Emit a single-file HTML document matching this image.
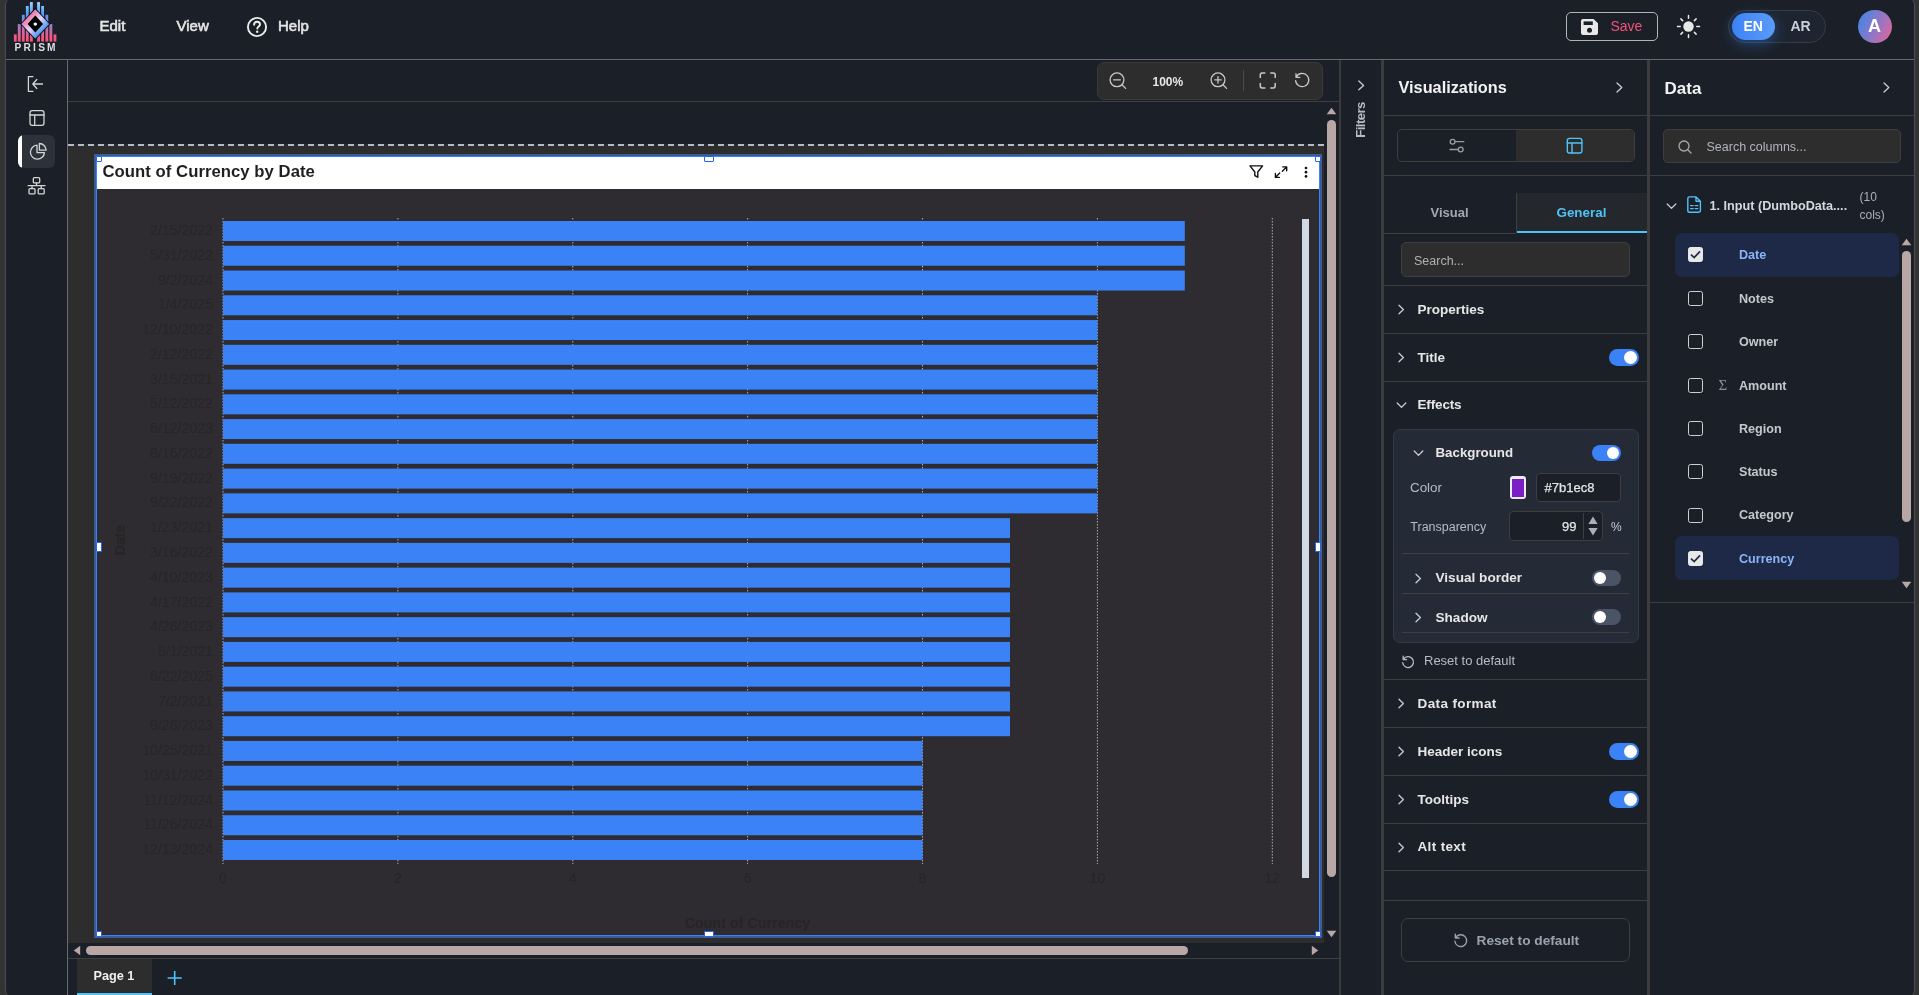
<!DOCTYPE html>
<html lang="en"><head><meta charset="utf-8"><title>PRISM</title>
<style>
*{box-sizing:border-box;margin:0;padding:0}
html,body{width:1919px;height:995px;overflow:hidden;background:#333333}
body{position:relative;font-family:"Liberation Sans",sans-serif;color:#e0e0e0;font-size:13px}
.abs{position:absolute}
#app{position:absolute;left:5px;top:-4px;width:1910px;height:1003px;background:#1b2028;border:1px solid #4c4c4c;border-radius:9px}
.hl{position:absolute;height:1px;background:#3e3e3e}
.vl{position:absolute;width:1px;background:#3e3e3e}
.t{position:absolute;white-space:nowrap;line-height:1}
.b{font-weight:bold}
svg{position:absolute;overflow:visible}
.ico{fill:none;stroke:#d4d4d4;stroke-width:1.3;stroke-linecap:round;stroke-linejoin:round}
/* toggles */
.tg{position:absolute;width:30px;height:17px;border-radius:9px;background:#3b82f6}
.tg i{position:absolute;right:2px;top:2px;width:13px;height:13px;border-radius:50%;background:#fff}
.tg.off{background:#4a5464}
.tg.off i{right:auto;left:2px}
.tg.sm{width:29px;height:16px}
.tg.sm i{width:12px;height:12px}
.acc{position:absolute;left:1417.5px;font-weight:bold;font-size:13.5px;color:#e6e6e6;white-space:nowrap;line-height:1}
.chev{position:absolute}
.cb{position:absolute;left:1688px;width:15px;height:15px;border:1.6px solid #d0d0d0;border-radius:2.5px}
.cb.on{background:#e8e8e8;border-color:#e8e8e8}
.col{position:absolute;left:1739px;font-weight:bold;font-size:12.6px;color:#c4c8ce;white-space:nowrap;line-height:1}
.col.sel{color:#8ab4f8}
.row{position:absolute;left:1675px;width:224px;height:43.5px;border-radius:7px;background:#1e2947}
.hd{position:absolute;background:#fff;border:1px solid #2563eb;border-radius:1px}
#root{position:absolute;left:0;top:0;width:1919px;height:995px;will-change:transform}

</style></head>
<body>
<div id="root">
<div id="app"></div>

<!-- ===== top bar ===== -->
<div class="hl" style="left:6px;top:59px;width:1908px;background:#676b71"></div>
<!-- logo -->
<svg style="left:10px;top:0" width="50" height="56" viewBox="10 0 50 56">
 <defs>
  <linearGradient id="lg1" gradientUnits="userSpaceOnUse" x1="0" y1="2" x2="0" y2="42">
   <stop offset="0" stop-color="#9fd4ff"/><stop offset="0.3" stop-color="#4f9cf5"/><stop offset="0.6" stop-color="#a879c4"/><stop offset="0.85" stop-color="#e85a8a"/><stop offset="1" stop-color="#ff4f7a"/>
  </linearGradient>
  <linearGradient id="lg2" gradientUnits="userSpaceOnUse" x1="27" y1="16" x2="43" y2="32">
   <stop offset="0" stop-color="#ee6aa0"/><stop offset="0.5" stop-color="#e8d6f8"/><stop offset="1" stop-color="#3b93f2"/>
  </linearGradient>
 </defs>
 <g fill="url(#lg1)">
  <rect x="13.9" y="34.4" width="2.8" height="7.2"/>
  <rect x="17.8" y="24.1" width="2.9" height="17.5"/>
  <rect x="21.9" y="14.8" width="2.8" height="26.8"/>
  <rect x="25.9" y="6" width="2.8" height="35.6"/>
  <rect x="29.9" y="2.1" width="2.9" height="39.5"/>
  <rect x="37.1" y="2.1" width="2.9" height="39.5"/>
  <rect x="41.2" y="6" width="2.8" height="35.6"/>
  <rect x="45.4" y="14.8" width="2.8" height="26.8"/>
  <rect x="49.4" y="24.1" width="2.9" height="17.5"/>
  <rect x="53.6" y="34.4" width="2.8" height="7.2"/>
 </g>
 <polygon points="35.3,8.1 50.3,24.0 35.3,39.9 20.3,24.0" fill="#000"/>
 <polygon points="35.3,9.2 49.3,24.0 35.3,38.8 21.3,24.0" fill="url(#lg2)"/>
 <polygon points="35.3,15.5 43.1,24.0 35.3,32.5 27.5,24.0" fill="#000"/>
 <circle cx="35.3" cy="24.1" r="1.7" fill="#fff"/>
 <text x="35.1" y="50.9" text-anchor="middle" font-family="Liberation Sans, sans-serif" font-size="10.2" font-weight="bold" fill="#dcdcdc" textLength="41" lengthAdjust="spacing">PRISM</text>
</svg>
<div class="t" style="left:99.5px;top:17.5px;font-size:15px;color:#e4e4e4;-webkit-text-stroke:0.6px #e4e4e4">Edit</div>
<div class="t" style="left:176.5px;top:17.5px;font-size:15px;color:#e4e4e4;-webkit-text-stroke:0.6px #e4e4e4">View</div>
<svg style="left:246px;top:15.6px" width="22" height="22" viewBox="0 0 22 22"><circle cx="11" cy="11" r="9.1" fill="none" stroke="#ececec" stroke-width="1.9"/><path d="M8.1 8.7c0-1.7 1.3-2.9 3-2.9 1.6 0 2.9 1 2.9 2.6 0 2-2.7 2.2-2.7 4.2" fill="none" stroke="#ececec" stroke-width="1.9" stroke-linecap="round"/><circle cx="11.2" cy="15.8" r="1.2" fill="#ececec"/></svg>
<div class="t" style="left:278px;top:17.5px;font-size:15px;color:#e4e4e4;-webkit-text-stroke:0.6px #e4e4e4">Help</div>

<!-- save -->
<div class="abs" style="left:1566px;top:12px;width:92px;height:29px;border:1px solid #b4b4b4;border-radius:5px"></div>
<svg style="left:1581px;top:19px" width="17" height="16" viewBox="0 0 17 16"><path d="M2 0h10.5L17 4.2V14a2 2 0 0 1-2 2H2a2 2 0 0 1-2-2V2a2 2 0 0 1 2-2z" fill="#e8e8e8"/><rect x="2.6" y="2.4" width="9.2" height="3.6" fill="#1b2028"/><circle cx="8.5" cy="11.3" r="2.5" fill="#1b2028"/></svg>
<div class="t" style="left:1610.5px;top:18.7px;font-size:14px;color:#f0527a">Save</div>
<!-- sun -->
<svg style="left:1676px;top:14px" width="25" height="25" viewBox="-12.5 -12.5 25 25"><circle r="5.2" fill="#e8e8e8"/><g stroke="#e8e8e8" stroke-width="1.5" stroke-linecap="round"><path d="M0 -8.3V-11M0 8.3V11M-8.3 0H-11M8.3 0H11M-5.9 -5.9L-7.6 -7.6M5.9 -5.9L7.6 -7.6M-5.9 5.9L-7.6 7.6M5.9 5.9L7.6 7.6"/></g></svg>
<!-- lang -->
<div class="abs" style="left:1728px;top:10px;width:98px;height:33px;border:1px solid #313c4f;border-radius:17px;background:#1e2530"></div>
<div class="abs" style="left:1732px;top:13px;width:43px;height:27px;border-radius:14px;background:linear-gradient(90deg,#3b82f6,#5b9cf8);box-shadow:0 4px 14px rgba(59,130,246,.4)"></div>
<div class="t b" style="left:1743.5px;top:18.7px;font-size:14px;color:#fff">EN</div>
<div class="t b" style="left:1790.5px;top:18.7px;font-size:14px;color:#c8d0dc">AR</div>
<!-- avatar -->
<div class="abs" style="left:1858px;top:9.5px;width:33.5px;height:33.5px;border-radius:50%;background:linear-gradient(115deg,#3f86e8 5%,#8a78c8 50%,#e0669c 95%)"></div>
<div class="t b" style="left:1868px;top:17px;font-size:18px;color:#fff">A</div>

<!-- ===== left sidebar ===== -->
<div class="vl" style="left:67px;top:60px;height:935px;background:#676b71"></div>
<svg style="left:26px;top:74px" width="20" height="20" viewBox="26 74 20 20"><path class="ico" d="M33 76.6H28.4V91.3H33M42.5 84H33.2M36.8 79.5L32.8 84L36.8 88.5"/></svg>
<svg style="left:28px;top:109px" width="18" height="18" viewBox="28 109 18 18"><rect class="ico" x="30" y="110.7" width="14" height="14.6" rx="2.2"/><path class="ico" d="M30 115H44M34.7 115V125.3"/></svg>
<div class="abs" style="left:18px;top:135px;width:37px;height:33px;border-radius:6px;background:#2c313a;overflow:hidden"><div style="position:absolute;left:0;top:0;width:4px;height:33px;background:#fff"></div></div>
<svg style="left:29px;top:142px" width="19" height="19" viewBox="29 142 19 19"><path class="ico" d="M37 145.2A7 7 0 1 0 44.4 152.6H37Z"/><path class="ico" d="M39.4 143.5V150.2H46.1A6.8 6.8 0 0 0 39.4 143.5Z"/></svg>
<svg style="left:27px;top:176px" width="20" height="20" viewBox="27 176 20 20"><rect class="ico" x="33.3" y="177.7" width="6.4" height="5.2" rx="1"/><rect class="ico" x="29" y="188.7" width="6" height="5.2" rx="1"/><rect class="ico" x="38.2" y="188.7" width="6" height="5.2" rx="1"/><path class="ico" d="M36.5 183V185.7M28.2 185.7H45M32 185.7V188.6M41.2 185.7V188.6"/></svg>

<!-- ===== canvas area ===== -->
<div class="hl" style="left:68px;top:101px;width:1272px"></div>
<div class="vl" style="left:1339px;top:60px;height:935px;width:2px;background:#3a3a3a"></div>
<!-- zoom toolbar -->
<div class="abs" style="left:1097px;top:62px;width:226px;height:38px;border-radius:7px;background:#2d2d2d;border:1px solid #3a3a3a"></div>
<svg style="left:1106px;top:70px" width="22" height="22" viewBox="1106 70 22 22"><circle class="ico" style="stroke:#c8c8c8" cx="1117" cy="79.8" r="6.9"/><path class="ico" style="stroke:#c8c8c8" d="M1122 84.8L1125.6 88.4M1113.6 79.8H1120.4"/></svg>
<div class="t b" style="left:1152.5px;top:75.5px;font-size:12px;color:#e8e8e8">100%</div>
<svg style="left:1207px;top:70px" width="22" height="22" viewBox="1207 70 22 22"><circle class="ico" style="stroke:#c8c8c8" cx="1218" cy="79.8" r="6.9"/><path class="ico" style="stroke:#c8c8c8" d="M1223 84.8L1226.6 88.4M1214.8 79.8H1221.2M1218 76.6V83"/></svg>
<div class="vl" style="left:1243px;top:70px;height:21px;background:#4a4a4a"></div>
<svg style="left:1258px;top:71px" width="20" height="20" viewBox="1258 71 20 20"><path class="ico" style="stroke:#c8c8c8;stroke-width:1.5" d="M1260.3 77.5V74.9A1.8 1.8 0 0 1 1262.1 73.1H1264.8M1270.8 73.1H1273.4A1.8 1.8 0 0 1 1275.2 74.9V77.5M1275.2 83.5V86.1A1.8 1.8 0 0 1 1273.4 87.9H1270.8M1264.8 87.9H1262.1A1.8 1.8 0 0 1 1260.3 86.1V83.5"/></svg>
<svg style="left:1292px;top:70px" width="22" height="22" viewBox="1292 70 22 22"><path class="ico" style="stroke:#c8c8c8" d="M1296.2 77.2A6.6 6.6 0 1 1 1295.6 80.6M1296 73.6V77.4H1299.8"/></svg>

<!-- canvas bg -->
<div class="abs" style="left:68px;top:146px;width:1256px;height:797px;background:#2d2d2d"></div>
<div class="abs" style="left:68px;top:144px;width:1256px;height:2px;background:repeating-linear-gradient(90deg,#b4bccb 0 6px,#2b2c2e 6px 10px)"></div>

<!-- chart -->
<div class="abs" style="left:94px;top:153.6px;width:1228px;height:784.7px;background:#3a5a98"></div>
<div class="abs" style="left:95.8px;top:155.8px;width:1224.4px;height:780.6px;background:#3b82f6"></div>
<div class="abs" style="left:97px;top:157px;width:1222px;height:778px;background:#2e2c30"></div>
<div class="abs" style="left:97px;top:157px;width:1222px;height:32px;background:#fff"></div>
<div class="t b" style="left:102.5px;top:163.5px;font-size:16.7px;letter-spacing:0.04px;color:#1f1f1f">Count of Currency by Date</div>
<svg style="left:1248px;top:164px" width="16" height="15" viewBox="1248 164 16 15"><path d="M1250 165.9H1262.6L1257.8 172V177.2L1254.8 175.6V172Z" fill="none" stroke="#111" stroke-width="1.4" stroke-linejoin="round"/></svg>
<svg style="left:1274px;top:165px" width="15" height="15" viewBox="1274 165 15 15"><path d="M1282.8 166.9H1286.7V170.8M1286.5 167.1L1282.4 171.2M1279.3 177.4H1275.4V173.5M1275.6 177.2L1279.7 173.1" fill="none" stroke="#111" stroke-width="1.4" stroke-linecap="round" stroke-linejoin="round"/></svg>
<svg style="left:1303px;top:165px" width="6" height="14" viewBox="1303 165 6 14"><circle cx="1306" cy="168" r="1.35" fill="#111"/><circle cx="1306" cy="172.2" r="1.35" fill="#111"/><circle cx="1306" cy="176.4" r="1.35" fill="#111"/></svg>
<svg class="plot" style="left:97px;top:189px" width="1222" height="747" viewBox="97 189 1222 747" font-family="Liberation Sans, sans-serif">
<line x1="223.0" y1="218" x2="223.0" y2="864" stroke="#d8d8d8" stroke-width="1" stroke-dasharray="1.5 1.5" opacity="0.75"/>
<line x1="397.9" y1="218" x2="397.9" y2="864" stroke="#d8d8d8" stroke-width="1" stroke-dasharray="1.5 1.5" opacity="0.75"/>
<line x1="572.8" y1="218" x2="572.8" y2="864" stroke="#d8d8d8" stroke-width="1" stroke-dasharray="1.5 1.5" opacity="0.75"/>
<line x1="747.6" y1="218" x2="747.6" y2="864" stroke="#d8d8d8" stroke-width="1" stroke-dasharray="1.5 1.5" opacity="0.75"/>
<line x1="922.5" y1="218" x2="922.5" y2="864" stroke="#d8d8d8" stroke-width="1" stroke-dasharray="1.5 1.5" opacity="0.75"/>
<line x1="1097.4" y1="218" x2="1097.4" y2="864" stroke="#d8d8d8" stroke-width="1" stroke-dasharray="1.5 1.5" opacity="0.75"/>
<line x1="1272.3" y1="218" x2="1272.3" y2="864" stroke="#d8d8d8" stroke-width="1" stroke-dasharray="1.5 1.5" opacity="0.75"/>
<rect x="223.0" y="221.00" width="961.8" height="20" fill="#3b82f6"/>
<text x="213" y="235.10" text-anchor="end" font-size="14.15" fill="#262627">2/15/2022</text>
<rect x="223.0" y="245.76" width="961.8" height="20" fill="#3b82f6"/>
<text x="213" y="259.86" text-anchor="end" font-size="14.15" fill="#262627">5/31/2022</text>
<rect x="223.0" y="270.52" width="961.8" height="20" fill="#3b82f6"/>
<text x="213" y="284.62" text-anchor="end" font-size="14.15" fill="#262627">9/2/2024</text>
<rect x="223.0" y="295.28" width="874.4" height="20" fill="#3b82f6"/>
<text x="213" y="309.38" text-anchor="end" font-size="14.15" fill="#262627">1/4/2025</text>
<rect x="223.0" y="320.04" width="874.4" height="20" fill="#3b82f6"/>
<text x="213" y="334.14" text-anchor="end" font-size="14.15" fill="#262627">12/10/2022</text>
<rect x="223.0" y="344.80" width="874.4" height="20" fill="#3b82f6"/>
<text x="213" y="358.90" text-anchor="end" font-size="14.15" fill="#262627">2/12/2022</text>
<rect x="223.0" y="369.56" width="874.4" height="20" fill="#3b82f6"/>
<text x="213" y="383.66" text-anchor="end" font-size="14.15" fill="#262627">3/15/2021</text>
<rect x="223.0" y="394.32" width="874.4" height="20" fill="#3b82f6"/>
<text x="213" y="408.42" text-anchor="end" font-size="14.15" fill="#262627">5/12/2022</text>
<rect x="223.0" y="419.08" width="874.4" height="20" fill="#3b82f6"/>
<text x="213" y="433.18" text-anchor="end" font-size="14.15" fill="#262627">5/12/2023</text>
<rect x="223.0" y="443.84" width="874.4" height="20" fill="#3b82f6"/>
<text x="213" y="457.94" text-anchor="end" font-size="14.15" fill="#262627">8/16/2022</text>
<rect x="223.0" y="468.60" width="874.4" height="20" fill="#3b82f6"/>
<text x="213" y="482.70" text-anchor="end" font-size="14.15" fill="#262627">9/19/2022</text>
<rect x="223.0" y="493.36" width="874.4" height="20" fill="#3b82f6"/>
<text x="213" y="507.46" text-anchor="end" font-size="14.15" fill="#262627">9/22/2022</text>
<rect x="223.0" y="518.12" width="787.0" height="20" fill="#3b82f6"/>
<text x="213" y="532.22" text-anchor="end" font-size="14.15" fill="#262627">1/23/2021</text>
<rect x="223.0" y="542.88" width="787.0" height="20" fill="#3b82f6"/>
<text x="213" y="556.98" text-anchor="end" font-size="14.15" fill="#262627">3/16/2022</text>
<rect x="223.0" y="567.64" width="787.0" height="20" fill="#3b82f6"/>
<text x="213" y="581.74" text-anchor="end" font-size="14.15" fill="#262627">4/10/2023</text>
<rect x="223.0" y="592.40" width="787.0" height="20" fill="#3b82f6"/>
<text x="213" y="606.50" text-anchor="end" font-size="14.15" fill="#262627">4/17/2022</text>
<rect x="223.0" y="617.16" width="787.0" height="20" fill="#3b82f6"/>
<text x="213" y="631.26" text-anchor="end" font-size="14.15" fill="#262627">4/28/2023</text>
<rect x="223.0" y="641.92" width="787.0" height="20" fill="#3b82f6"/>
<text x="213" y="656.02" text-anchor="end" font-size="14.15" fill="#262627">5/1/2021</text>
<rect x="223.0" y="666.68" width="787.0" height="20" fill="#3b82f6"/>
<text x="213" y="680.78" text-anchor="end" font-size="14.15" fill="#262627">6/22/2025</text>
<rect x="223.0" y="691.44" width="787.0" height="20" fill="#3b82f6"/>
<text x="213" y="705.54" text-anchor="end" font-size="14.15" fill="#262627">7/2/2021</text>
<rect x="223.0" y="716.20" width="787.0" height="20" fill="#3b82f6"/>
<text x="213" y="730.30" text-anchor="end" font-size="14.15" fill="#262627">9/28/2023</text>
<rect x="223.0" y="740.96" width="699.5" height="20" fill="#3b82f6"/>
<text x="213" y="755.06" text-anchor="end" font-size="14.15" fill="#262627">10/25/2021</text>
<rect x="223.0" y="765.72" width="699.5" height="20" fill="#3b82f6"/>
<text x="213" y="779.82" text-anchor="end" font-size="14.15" fill="#262627">10/31/2022</text>
<rect x="223.0" y="790.48" width="699.5" height="20" fill="#3b82f6"/>
<text x="213" y="804.58" text-anchor="end" font-size="14.15" fill="#262627">11/12/2024</text>
<rect x="223.0" y="815.24" width="699.5" height="20" fill="#3b82f6"/>
<text x="213" y="829.34" text-anchor="end" font-size="14.15" fill="#262627">11/26/2024</text>
<rect x="223.0" y="840.00" width="699.5" height="20" fill="#3b82f6"/>
<text x="213" y="854.10" text-anchor="end" font-size="14.15" fill="#262627">12/13/2024</text>
<text x="223.0" y="883" text-anchor="middle" font-size="14" fill="#252525">0</text>
<text x="397.9" y="883" text-anchor="middle" font-size="14" fill="#252525">2</text>
<text x="572.8" y="883" text-anchor="middle" font-size="14" fill="#252525">4</text>
<text x="747.6" y="883" text-anchor="middle" font-size="14" fill="#252525">6</text>
<text x="922.5" y="883" text-anchor="middle" font-size="14" fill="#252525">8</text>
<text x="1097.4" y="883" text-anchor="middle" font-size="14" fill="#252525">10</text>
<text x="1272.3" y="883" text-anchor="middle" font-size="14" fill="#252525">12</text>
<text x="747.5" y="928" text-anchor="middle" font-size="14.3" font-weight="bold" fill="#252525">Count of Currency</text>
<text transform="translate(125 540) rotate(-90)" text-anchor="middle" font-size="14.3" font-weight="bold" fill="#252525">Date</text>
<rect x="1302" y="219" width="7" height="659" fill="#cfd8e3"/>
</svg>
<!-- handles -->
<div class="hd" style="left:95.5px;top:155.5px;width:6.5px;height:6.5px"></div>
<div class="hd" style="left:703.5px;top:155.5px;width:10.5px;height:6.5px"></div>
<div class="hd" style="left:1314.5px;top:155.5px;width:6.5px;height:6.5px"></div>
<div class="hd" style="left:95.5px;top:541.5px;width:6.5px;height:10px"></div>
<div class="hd" style="left:1314.5px;top:541.5px;width:6.5px;height:10px"></div>
<div class="hd" style="left:95.5px;top:930.5px;width:6px;height:6px"></div>
<div class="hd" style="left:703.5px;top:930.5px;width:10.5px;height:6px"></div>
<div class="hd" style="left:1314.5px;top:930.5px;width:6px;height:6px"></div>

<!-- scrollbars -->
<div class="abs" style="left:1327px;top:120px;width:9px;height:757px;border-radius:5px;background:#b9a7a6"></div>
<svg style="left:1326px;top:107px" width="11" height="8" viewBox="0 0 11 8"><path d="M5.5 0.8L10.3 7.2H0.7Z" fill="#b9a7a6"/></svg>
<svg style="left:1326px;top:930px" width="11" height="8" viewBox="0 0 11 8"><path d="M5.5 7.2L10.3 0.8H0.7Z" fill="#b9a7a6"/></svg>
<div class="abs" style="left:86px;top:946px;width:1102px;height:9px;border-radius:5px;background:#b9a7a6"></div>
<svg style="left:73px;top:945px" width="8" height="11" viewBox="0 0 8 11"><path d="M0.8 5.5L7.2 0.7V10.3Z" fill="#b9a7a6"/></svg>
<svg style="left:1311px;top:945px" width="8" height="11" viewBox="0 0 8 11"><path d="M7.2 5.5L0.8 0.7V10.3Z" fill="#b9a7a6"/></svg>
<div class="hl" style="left:68px;top:958px;width:1272px"></div>
<!-- page tabs -->
<div class="abs" style="left:77px;top:959px;width:75px;height:36px;background:#2d2d2d;border-bottom:2px solid #4fc3f7"></div>
<div class="t b" style="left:93.5px;top:970.1px;font-size:12.7px;color:#f0f0f0">Page 1</div>
<svg style="left:166px;top:970px" width="17" height="16" viewBox="166 970 17 16"><path d="M167.6 978H181.8M174.7 971V985" fill="none" stroke="#4fc3f7" stroke-width="1.6"/></svg>

<!-- ===== filters strip ===== -->
<svg style="left:1356px;top:79px" width="10" height="13" viewBox="1356 79 10 13"><path class="ico" style="stroke:#c8ccd4" d="M1358.8 81L1363.6 85.4L1358.8 89.8"/></svg>
<div class="t b" style="left:1361.3px;top:119.7px;font-size:13.2px;letter-spacing:-0.6px;color:#b4bcc8;transform:translate(-50%,-50%) rotate(-90deg)">Filters</div>
<div class="vl" style="left:1381px;top:60px;height:935px;width:3px;background:#3c3c3c"></div>

<!-- ===== visualizations panel ===== -->
<div class="t b" style="left:1398.5px;top:79.4px;font-size:16.3px;color:#f2f2f2">Visualizations</div>
<svg style="left:1614px;top:81px" width="10" height="13" viewBox="0 0 10 13"><path class="ico" style="stroke:#c8ccd4" d="M3 2L7.8 6.5L3 11"/></svg>
<div class="hl" style="left:1384px;top:115px;width:263px"></div>
<div class="abs" style="left:1397px;top:129px;width:238px;height:33px;border:1px solid #3e3e3e;border-radius:5px;background:#1b2028"></div>
<div class="abs" style="left:1516px;top:130px;width:118px;height:31px;border-radius:0 4px 4px 0;background:#2d2d2d"></div>
<svg style="left:1448px;top:137px" width="18" height="17" viewBox="1448 137 18 17"><circle class="ico" style="stroke:#9c9c9c" cx="1452.6" cy="141.7" r="2.4"/><circle class="ico" style="stroke:#9c9c9c" cx="1460.7" cy="149.5" r="2.4"/><path class="ico" style="stroke:#9c9c9c" d="M1455.2 141.7H1463.8M1450 149.5H1458.1"/></svg>
<svg style="left:1565px;top:136px" width="19" height="19" viewBox="1565 136 19 19"><rect class="ico" style="stroke:#4fc3f7;stroke-width:1.4" x="1567.3" y="138.4" width="14.6" height="14.6" rx="2.2"/><path class="ico" style="stroke:#4fc3f7;stroke-width:1.4" d="M1567.3 143H1581.9M1572 143V153"/></svg>
<div class="hl" style="left:1384px;top:175px;width:263px"></div>
<div class="abs" style="left:1516px;top:193px;width:131px;height:40px;background:#24272c;border-bottom:2px solid #4fc3f7"></div>
<div class="hl" style="left:1384px;top:233px;width:132px"></div>
<div class="vl" style="left:1515.5px;top:193px;height:40px"></div>
<div class="t b" style="left:1430.5px;top:206.3px;font-size:13px;color:#a4a8b0">Visual</div>
<div class="t b" style="left:1556.5px;top:205.5px;font-size:13.4px;color:#4fc3f7">General</div>
<div class="abs" style="left:1401px;top:242px;width:229px;height:35px;border:1px solid #3e3e3e;border-radius:5px;background:#2d2d2d"></div>
<div class="t" style="left:1414px;top:254.7px;font-size:12.5px;color:#b0b0b0">Search...</div>
<div class="hl" style="left:1384px;top:285px;width:263px"></div>
<div class="hl" style="left:1384px;top:333px;width:263px"></div>
<div class="hl" style="left:1384px;top:381px;width:263px"></div>
<div class="hl" style="left:1384px;top:679px;width:263px"></div>
<div class="hl" style="left:1384px;top:727px;width:263px"></div>
<div class="hl" style="left:1384px;top:775px;width:263px"></div>
<div class="hl" style="left:1384px;top:823px;width:263px"></div>
<div class="hl" style="left:1384px;top:870px;width:263px"></div>
<div class="hl" style="left:1384px;top:900px;width:263px"></div>

<svg class="chev" style="left:1396px;top:303px" width="10" height="13" viewBox="0 0 10 13"><path class="ico" style="stroke:#c8ccd4" d="M3 2.2L7.4 6.5L3 10.8"/></svg>
<div class="acc" style="top:303px">Properties</div>
<svg class="chev" style="left:1396px;top:351px" width="10" height="13" viewBox="0 0 10 13"><path class="ico" style="stroke:#c8ccd4" d="M3 2.2L7.4 6.5L3 10.8"/></svg>
<div class="acc" style="top:351px">Title</div>
<div class="tg" style="left:1609px;top:348.9px"><i></i></div>
<svg class="chev" style="left:1394.5px;top:400px" width="13" height="10" viewBox="0 0 13 10"><path class="ico" style="stroke:#c8ccd4" d="M2.2 3L6.5 7.4L10.8 3"/></svg>
<div class="acc" style="top:398px;letter-spacing:-0.15px">Effects</div>

<!-- effects card -->
<div class="abs" style="left:1393px;top:429px;width:246px;height:213.5px;border:1px solid #333a46;border-radius:7px;background:#242b36"></div>
<svg class="chev" style="left:1411.5px;top:448px" width="13" height="10" viewBox="0 0 13 10"><path class="ico" style="stroke:#c8ccd4" d="M2.2 3L6.5 7.4L10.8 3"/></svg>
<div class="acc" style="left:1435.5px;top:446px;font-size:13.3px">Background</div>
<div class="tg sm" style="left:1592px;top:445px"><i></i></div>
<div class="t" style="left:1410px;top:480.5px;font-size:13.4px;color:#b4bcc8">Color</div>
<div class="abs" style="left:1510px;top:476px;width:16px;height:23px;border-radius:3px;background:#ececec"></div>
<div class="abs" style="left:1512.3px;top:478.5px;width:11.4px;height:18px;background:#7b1ec8"></div>
<div class="abs" style="left:1536px;top:472.5px;width:85px;height:29px;border:1px solid #3e3e3e;border-radius:4px;background:#1b2028"></div>
<div class="t" style="left:1544.5px;top:481px;font-size:13px;color:#e6e6e6;-webkit-text-stroke:0.25px #e6e6e6">#7b1ec8</div>
<div class="t" style="left:1410.3px;top:520.7px;font-size:12.5px;color:#b4bcc8">Transparency</div>
<div class="abs" style="left:1509px;top:511px;width:93.5px;height:29.5px;border:1px solid #3e3e3e;border-radius:4px;background:#1b2028"></div>
<div class="vl" style="left:1583px;top:513px;height:26px"></div>
<div class="t" style="left:1562px;top:520px;font-size:13px;color:#e6e6e6;-webkit-text-stroke:0.25px #e6e6e6">99</div>
<svg style="left:1587px;top:514px" width="12" height="24" viewBox="0 0 12 24"><path d="M6 2.5L10.6 10H1.4Z" fill="#aab0ba"/><path d="M6 21.5L10.6 14H1.4Z" fill="#aab0ba"/></svg>
<div class="t" style="left:1611px;top:520.5px;font-size:12px;color:#c8ccd4">%</div>
<div class="hl" style="left:1402px;top:553px;width:227px"></div>
<svg class="chev" style="left:1413px;top:571.5px" width="10" height="13" viewBox="0 0 10 13"><path class="ico" style="stroke:#c8ccd4" d="M3 2.2L7.4 6.5L3 10.8"/></svg>
<div class="acc" style="left:1435.5px;top:571px;font-size:13.6px">Visual border</div>
<div class="tg sm off" style="left:1592px;top:569.5px"><i></i></div>
<div class="hl" style="left:1402px;top:593px;width:227px"></div>
<svg class="chev" style="left:1413px;top:611px" width="10" height="13" viewBox="0 0 10 13"><path class="ico" style="stroke:#c8ccd4" d="M3 2.2L7.4 6.5L3 10.8"/></svg>
<div class="acc" style="left:1435.5px;top:610.5px;font-size:13.6px">Shadow</div>
<div class="tg sm off" style="left:1592px;top:609px"><i></i></div>
<div class="hl" style="left:1402px;top:632px;width:227px"></div>

<svg style="left:1400px;top:653.5px" width="16" height="16" viewBox="0 0 16 16"><path class="ico" style="stroke:#b4bcc8" d="M3.4 5.4A5.4 5.4 0 1 1 2.7 8.6M3.2 2.2V5.6H6.6"/></svg>
<div class="t" style="left:1424px;top:654px;font-size:13px;color:#b4bcc8">Reset to default</div>

<svg class="chev" style="left:1396px;top:697px" width="10" height="13" viewBox="0 0 10 13"><path class="ico" style="stroke:#c8ccd4" d="M3 2.2L7.4 6.5L3 10.8"/></svg>
<div class="acc" style="top:697px;letter-spacing:0.38px">Data format</div>
<svg class="chev" style="left:1396px;top:745px" width="10" height="13" viewBox="0 0 10 13"><path class="ico" style="stroke:#c8ccd4" d="M3 2.2L7.4 6.5L3 10.8"/></svg>
<div class="acc" style="top:745px">Header icons</div>
<div class="tg" style="left:1609px;top:742.8px"><i></i></div>
<svg class="chev" style="left:1396px;top:793px" width="10" height="13" viewBox="0 0 10 13"><path class="ico" style="stroke:#c8ccd4" d="M3 2.2L7.4 6.5L3 10.8"/></svg>
<div class="acc" style="top:793px">Tooltips</div>
<div class="tg" style="left:1609px;top:791px"><i></i></div>
<svg class="chev" style="left:1396px;top:840.5px" width="10" height="13" viewBox="0 0 10 13"><path class="ico" style="stroke:#c8ccd4" d="M3 2.2L7.4 6.5L3 10.8"/></svg>
<div class="acc" style="top:840px;letter-spacing:0.35px">Alt text</div>

<div class="abs" style="left:1401px;top:918px;width:229px;height:44px;border:1px solid #3e3e3e;border-radius:7px"></div>
<svg style="left:1451.5px;top:932px" width="17" height="17" viewBox="0 0 17 17"><path class="ico" style="stroke:#9aa2ae;stroke-width:1.4" d="M3.6 5.8A5.9 5.9 0 1 1 2.9 9.2M3.3 2.2V6H7.1"/></svg>
<div class="t b" style="left:1476.5px;top:933.5px;font-size:13.7px;color:#9aa2ae">Reset to default</div>

<div class="vl" style="left:1647px;top:60px;height:935px;width:3px;background:#3c3c3c"></div>

<!-- ===== data panel ===== -->
<div class="t b" style="left:1664.5px;top:79.5px;font-size:17px;color:#f2f2f2">Data</div>
<svg style="left:1881px;top:81px" width="10" height="13" viewBox="0 0 10 13"><path class="ico" style="stroke:#c8ccd4" d="M3 2L7.8 6.5L3 11"/></svg>
<div class="hl" style="left:1650px;top:115px;width:264px"></div>
<div class="abs" style="left:1663px;top:129px;width:238px;height:34px;border:1px solid #3e3e3e;border-radius:5px;background:#2d2d2d"></div>
<svg style="left:1677px;top:138.5px" width="16" height="16" viewBox="0 0 16 16"><circle class="ico" style="stroke:#a8a8a8" cx="7" cy="7" r="5"/><path class="ico" style="stroke:#a8a8a8" d="M10.8 10.8L14 14"/></svg>
<div class="t" style="left:1706.5px;top:140.7px;font-size:12.5px;color:#b0b4ba">Search columns...</div>
<div class="hl" style="left:1650px;top:175px;width:264px"></div>
<svg class="chev" style="left:1664.5px;top:200.5px" width="13" height="10" viewBox="0 0 13 10"><path class="ico" style="stroke:#c8ccd4" d="M2.2 3L6.5 7.4L10.8 3"/></svg>
<svg style="left:1686px;top:195px" width="16" height="19" viewBox="1686 195 16 19"><path class="ico" style="stroke:#4fc3f7;stroke-width:1.4" d="M1696 196.9H1689.6A1.8 1.8 0 0 0 1687.8 198.7V210.4A1.8 1.8 0 0 0 1689.6 212.2H1698.6A1.8 1.8 0 0 0 1700.4 210.4V201.3ZM1696 196.9V201.3H1700.4M1690.6 205.6H1693.2M1695.2 205.6H1697.8M1690.6 208.6H1693.2M1695.2 208.6H1697.8"/></svg>
<div class="t b" style="left:1709.5px;top:199.7px;font-size:12.65px;color:#d4d8de">1. Input (DumboData....</div>
<div class="t" style="left:1859.5px;top:191px;font-size:12px;color:#a8b0bc">(10</div>
<div class="t" style="left:1859.5px;top:209px;font-size:12px;color:#a8b0bc">cols)</div>

<div class="row" style="top:233px"></div>
<div class="row" style="top:536px"></div>
<div class="cb on" style="top:247.3px"></div><svg style="left:1688px;top:247.3px" width="15" height="15" viewBox="0 0 15 15"><path d="M3 7.6L6.2 10.6L12 4.4" fill="none" stroke="#1e2947" stroke-width="1.7"/></svg>
<div class="col sel" style="top:249.2px">Date</div>
<div class="cb" style="top:291px"></div><div class="col" style="top:292.7px">Notes</div>
<div class="cb" style="top:334.3px"></div><div class="col" style="top:336.2px">Owner</div>
<div class="cb" style="top:377.6px"></div><div class="col" style="top:379.5px">Amount</div>
<div class="t" style="left:1718.5px;top:377.5px;font-size:15px;color:#8a909a;font-family:'Liberation Serif',serif">Σ</div>
<div class="cb" style="top:420.9px"></div><div class="col" style="top:422.7px">Region</div>
<div class="cb" style="top:464.2px"></div><div class="col" style="top:465.7px">Status</div>
<div class="cb" style="top:507.5px"></div><div class="col" style="top:508.7px">Category</div>
<div class="cb on" style="top:550.8px"></div><svg style="left:1688px;top:550.8px" width="15" height="15" viewBox="0 0 15 15"><path d="M3 7.6L6.2 10.6L12 4.4" fill="none" stroke="#1e2947" stroke-width="1.7"/></svg>
<div class="col sel" style="top:552.7px">Currency</div>

<div class="abs" style="left:1902px;top:251px;width:9px;height:271px;border-radius:5px;background:#b9a7a6"></div>
<svg style="left:1901px;top:238px" width="11" height="8" viewBox="0 0 11 8"><path d="M5.5 0.8L10.3 7.2H0.7Z" fill="#b9a7a6"/></svg>
<svg style="left:1901px;top:580.5px" width="11" height="8" viewBox="0 0 11 8"><path d="M5.5 7.2L10.3 0.8H0.7Z" fill="#b9a7a6"/></svg>
<div class="hl" style="left:1650px;top:602px;width:264px"></div>

</div>

</body></html>
